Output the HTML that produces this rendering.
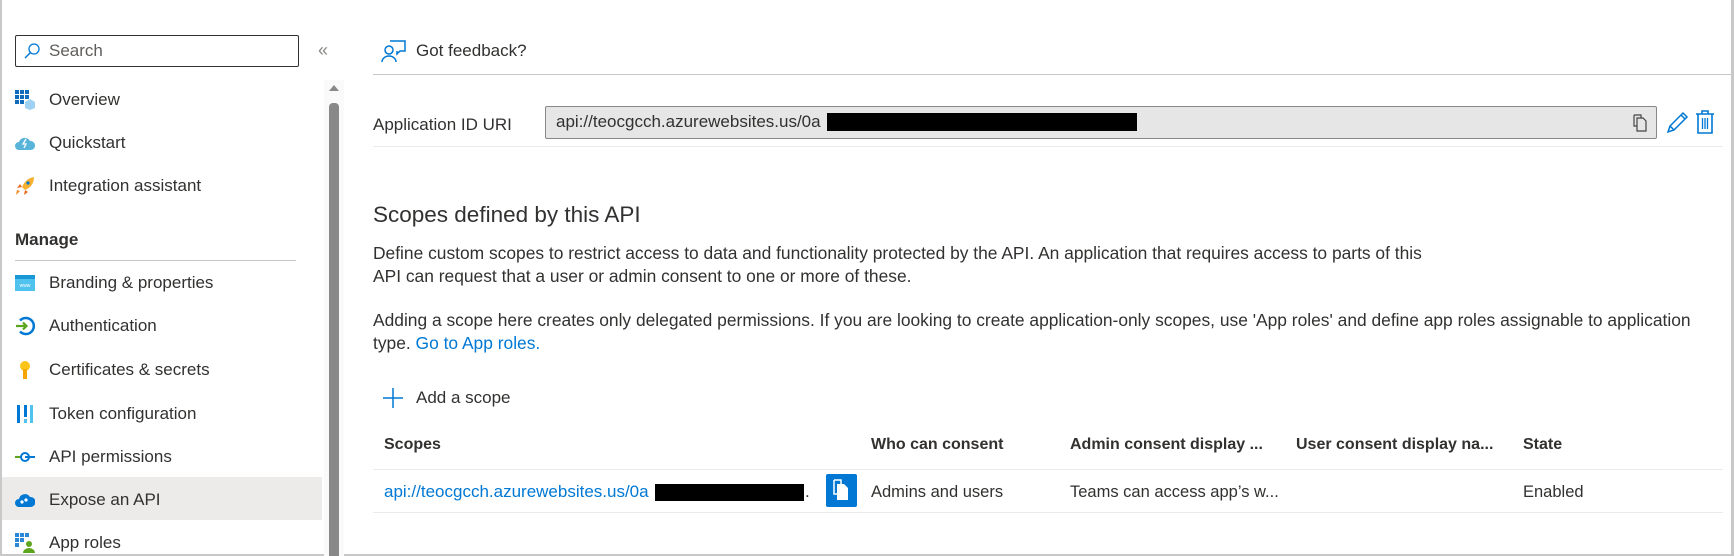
<!DOCTYPE html>
<html><head><meta charset="utf-8">
<style>
*{box-sizing:border-box;margin:0;padding:0}
body{width:1734px;height:556px;background:#fff;font-family:"Liberation Sans",sans-serif;color:#323130;position:relative;overflow:hidden}
.abs{position:absolute}
.nav{position:absolute;left:49px;font-size:17px;color:#323130;white-space:nowrap;line-height:20px}
.ic{position:absolute;left:15px;width:20px;height:20px}
.t{position:absolute;font-size:17px;white-space:nowrap;line-height:20px}
.p{font-size:17.4px}
.link{color:#0078d4}
.hd{font-weight:bold;font-size:16px}
</style></head><body>
<div class="abs" style="left:0;top:0;width:2px;height:556px;background:#c8c8c8"></div>
<div class="abs" style="left:1731px;top:0;width:3px;height:556px;background:#c8c8c8"></div>
<div class="abs" style="left:0;top:554px;width:1734px;height:2px;background:#c8c8c8"></div>

<div class="abs" style="left:15px;top:35px;width:284px;height:32px;border:1px solid #323130;border-radius:2px"></div>
<svg class="abs" style="left:23px;top:42px" width="18" height="18" viewBox="0 0 18 18"><circle cx="11" cy="7" r="5" fill="none" stroke="#0078d4" stroke-width="1.3"/><path d="M7.5 10.5L2 16" stroke="#0078d4" stroke-width="1.5"/></svg>
<div class="nav" style="left:49px;top:41px;color:#605e5c">Search</div>
<div class="abs" style="left:318px;top:40px;font-size:18px;color:#8a8886">«</div>

<div class="abs" style="left:324px;top:80px;width:20px;height:476px;background:#fafafa"></div>
<svg class="abs" style="left:328px;top:84px" width="12" height="8"><path d="M1 7L6 1L11 7Z" fill="#8a8886"/></svg>
<div class="abs" style="left:329px;top:103px;width:10px;height:453px;background:#888;border-radius:4px 4px 0 0"></div>

<svg class="ic" style="top:90px" viewBox="0 0 20 20"><g fill="#0f6cbd"><rect x="0" y="0" width="4" height="4"/><rect x="5" y="0" width="4" height="4"/><rect x="10" y="0" width="4" height="4"/><rect x="0" y="5" width="4" height="4"/><rect x="5" y="5" width="4" height="4"/><rect x="10" y="5" width="4" height="4"/><rect x="0" y="10" width="4" height="4"/><rect x="5" y="10" width="4" height="4"/></g><path d="M10 12l5-3 5 3v6l-5 2-5-2z" fill="#9fd2f2"/></svg>
<div class="nav" style="top:90px">Overview</div>
<svg class="ic" style="top:133px" viewBox="0 0 20 20"><path d="M4 17a4 4 0 0 1 0-8a6 6 0 0 1 11-1a4.5 4.5 0 0 1 1 9z" fill="#59b4d9"/><path d="M11 6l-3 5h3l-2 4" stroke="#fff" stroke-width="1.3" fill="none"/></svg>
<div class="nav" style="top:133px">Quickstart</div>
<svg class="ic" style="top:176px" viewBox="0 0 20 20"><path d="M19 1c-6 1-10 5-12 10l3 3c5-2 9-6 9-13z" fill="#f7b030"/><path d="M7 11L2 12l3-4zM10 14l-1 5 4-3z" fill="#e86a1e"/><path d="M5 15l-4 4 1-5z" fill="#f78c1e"/><circle cx="13" cy="7" r="1.6" fill="#0078d4"/></svg>
<div class="nav" style="top:176px">Integration assistant</div>
<div class="nav" style="left:15px;top:230px;font-weight:bold">Manage</div>
<div class="abs" style="left:15px;top:260px;width:281px;height:1px;background:#c8c6c4"></div>
<svg class="ic" style="top:273px" viewBox="0 0 20 20"><rect x="0" y="2" width="20" height="16" fill="#50c2ee"/><rect x="0" y="2" width="20" height="4" fill="#1a97d5"/><text x="10" y="14" font-size="5" fill="#fff" text-anchor="middle" font-family="Liberation Sans">www</text></svg>
<div class="nav" style="top:273px">Branding &amp; properties</div>
<svg class="ic" style="top:316px" viewBox="0 0 20 20"><path d="M5 4.5A8 8 0 1 1 5 15.5" stroke="#0078d4" stroke-width="2.5" fill="none"/><path d="M1 10h10M8 6.5l3.5 3.5L8 13.5" stroke="#5ea51e" stroke-width="2.2" fill="none"/></svg>
<div class="nav" style="top:316px">Authentication</div>
<svg class="ic" style="top:360px" viewBox="0 0 20 20"><circle cx="10" cy="6" r="5" fill="#fcc419"/><rect x="8" y="9" width="4" height="10" fill="#f6a600"/></svg>
<div class="nav" style="top:360px">Certificates &amp; secrets</div>
<svg class="ic" style="top:404px" viewBox="0 0 20 20"><g fill="#0078d4"><rect x="2" y="1" width="3" height="18"/><rect x="9" y="1" width="3" height="12"/><rect x="9" y="15" width="3" height="4" fill="#50c2ee"/><rect x="15" y="1" width="3" height="18" fill="#50c2ee"/></g></svg>
<div class="nav" style="top:404px">Token configuration</div>
<svg class="ic" style="top:447px" viewBox="0 0 20 20"><path d="M0 10h6" stroke="#5ea51e" stroke-width="2"/><circle cx="10" cy="10" r="4" fill="none" stroke="#0078d4" stroke-width="2"/><path d="M10 10h10" stroke="#0078d4" stroke-width="2"/></svg>
<div class="nav" style="top:447px">API permissions</div>
<div class="abs" style="left:2px;top:477px;width:320px;height:43px;background:#edebe9"></div>
<svg class="ic" style="top:490px" viewBox="0 0 20 20"><path d="M4 17a4 4 0 0 1 0-8a6 6 0 0 1 11-2a4.5 4.5 0 0 1 1 10z" fill="#0078d4"/><circle cx="7" cy="12" r="1.6" fill="#fff"/><circle cx="11" cy="10" r="1.6" fill="#fff"/></svg>
<div class="nav" style="top:490px">Expose an API</div>
<svg class="ic" style="top:533px" viewBox="0 0 20 20"><g fill="#2b88d8"><rect x="0" y="0" width="4" height="4"/><rect x="5" y="0" width="4" height="4"/><rect x="10" y="0" width="4" height="4"/><rect x="0" y="5" width="4" height="4"/><rect x="5" y="5" width="4" height="4"/><rect x="0" y="10" width="4" height="4"/></g><circle cx="14" cy="11" r="3" fill="#5ea51e"/><path d="M8 20a6 5 0 0 1 12 0z" fill="#5ea51e"/></svg>
<div class="nav" style="top:533px">App roles</div>

<svg class="abs" style="left:381px;top:39px" width="26" height="24" viewBox="0 0 26 24"><circle cx="8" cy="11" r="4" fill="none" stroke="#0078d4" stroke-width="1.5"/><path d="M1 23a7 6 0 0 1 14 0" fill="none" stroke="#0078d4" stroke-width="1.5"/><path d="M9 2h15v10h-5l-3 3v-3" fill="none" stroke="#0078d4" stroke-width="1.5"/></svg>
<div class="t" style="left:416px;top:41px">Got feedback?</div>
<div class="abs" style="left:373px;top:74px;width:1358px;height:1px;background:#c8c6c4"></div>

<div class="t" style="left:373px;top:115px">Application ID URI</div>
<div class="abs" style="left:545px;top:106px;width:1112px;height:33px;background:#e6e6e6;border:1px solid #8a8886;border-radius:2px"></div>
<div class="t" style="left:556px;top:112px">api://teocgcch.azurewebsites.us/0a</div>
<div class="abs" style="left:827px;top:113px;width:310px;height:18px;background:#000"></div>
<svg class="abs" style="left:1633px;top:114px" width="16" height="18" viewBox="0 0 16 18"><path d="M1 1h7v3M1 1v11h3" fill="none" stroke="#444" stroke-width="1.2"/><path d="M4 4h6l3 3v10H4z" fill="none" stroke="#444" stroke-width="1.2"/></svg>
<svg class="abs" style="left:1666px;top:110px" width="24" height="24" viewBox="0 0 24 24"><path d="M2 22l2-6L17 3l4 4L8 20zM4 16l4 4M15 5l4 4" fill="none" stroke="#0078d4" stroke-width="1.5"/></svg>
<svg class="abs" style="left:1695px;top:110px" width="20" height="24" viewBox="0 0 20 24"><path d="M1 4h18M7 4V1h6v3M3 4v19h14V4" fill="none" stroke="#0078d4" stroke-width="1.6"/><path d="M7.5 8v11M10 8v11M12.5 8v11" stroke="#0078d4" stroke-width="1.3"/></svg>
<div class="abs" style="left:373px;top:146px;width:1350px;height:1px;background:#edebe9"></div>

<div class="t" style="left:373px;top:201px;font-size:22.5px;line-height:28px">Scopes defined by this API</div>
<div class="t p" style="left:373px;top:243px">Define custom scopes to restrict access to data and functionality protected by the API. An application that requires access to parts of this</div>
<div class="t p" style="left:373px;top:266px">API can request that a user or admin consent to one or more of these.</div>
<div class="t p" style="left:373px;top:310px">Adding a scope here creates only delegated permissions. If you are looking to create application-only scopes, use 'App roles' and define app roles assignable to application</div>
<div class="t p" style="left:373px;top:333px">type. <span class="link">Go to App roles.</span></div>

<svg class="abs" style="left:383px;top:388px" width="20" height="20"><path d="M10 0v20M0 10h20" stroke="#0078d4" stroke-width="1.5"/></svg>
<div class="t" style="left:416px;top:388px">Add a scope</div>

<div class="t hd" style="left:384px;top:435px">Scopes</div>
<div class="t hd" style="left:871px;top:435px">Who can consent</div>
<div class="t hd" style="left:1070px;top:435px">Admin consent display ...</div>
<div class="t hd" style="left:1296px;top:435px">User consent display na...</div>
<div class="t hd" style="left:1523px;top:435px">State</div>
<div class="abs" style="left:373px;top:469px;width:1350px;height:1px;background:#edebe9"></div>
<div class="t link" style="left:384px;top:482px">api://teocgcch.azurewebsites.us/0a</div>
<div class="abs" style="left:655px;top:484px;width:149px;height:17px;background:#000"></div>
<div class="t" style="left:805px;top:482px">.</div>
<div class="abs" style="left:826px;top:474px;width:31px;height:33px;background:#0078d4;border-radius:2px"></div>
<svg class="abs" style="left:831px;top:479px" width="20" height="22" viewBox="0 0 20 22"><path d="M3 1h7v4M3 1v14h3" fill="none" stroke="#fff" stroke-width="1.5"/><path d="M6 5h7l4 4v12H6z" fill="#fff"/></svg>
<div class="t" style="left:871px;top:482px;font-size:16.5px">Admins and users</div>
<div class="t" style="left:1070px;top:482px;font-size:16.5px">Teams can access app’s w...</div>
<div class="t" style="left:1523px;top:482px;font-size:16.5px">Enabled</div>
<div class="abs" style="left:373px;top:512px;width:1350px;height:1px;background:#edebe9"></div>
</body></html>
